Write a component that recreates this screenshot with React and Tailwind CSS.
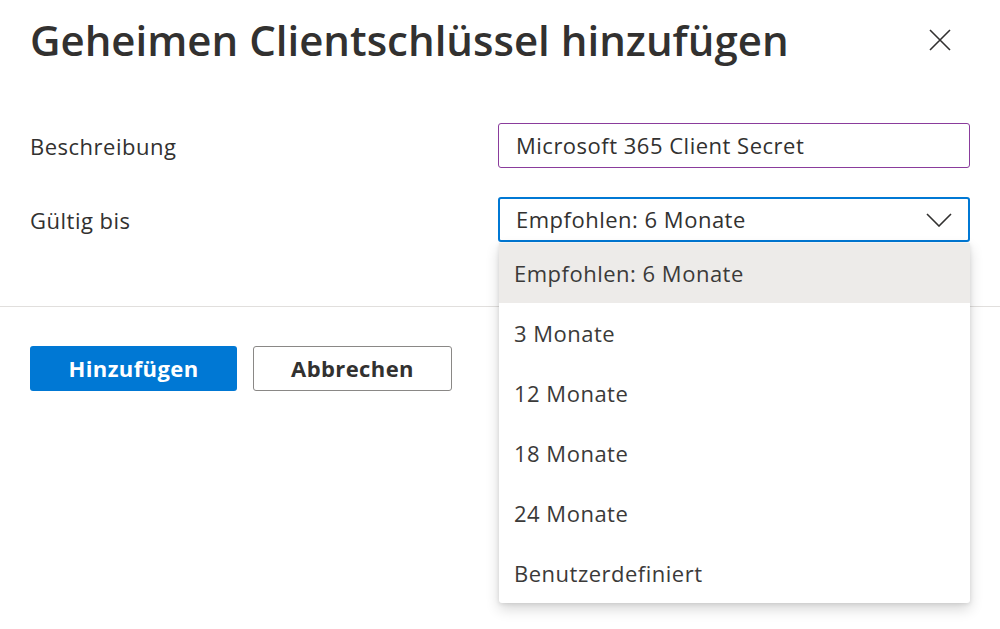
import React from "react";

const options = [
  "Empfohlen: 6 Monate",
  "3 Monate",
  "12 Monate",
  "18 Monate",
  "24 Monate",
  "Benutzerdefiniert",
];

export default function App() {
  return (
    <div className="relative w-[1000px] h-[629px] bg-white overflow-hidden font-['Open_Sans',sans-serif] text-[#323130]">
      {/* Header */}
      <div className="flex items-center justify-between h-[80px] pl-[30px] pr-[49px]">
        <h1 className="text-[42px] font-semibold leading-none">
          Geheimen Clientschlüssel hinzufügen
        </h1>
        <button className="w-[22px] h-[22px] flex items-center justify-center">
          <svg width="22" height="22" viewBox="0 0 22 22" fill="none" stroke="#323130" strokeWidth="1.6">
            <path d="M1 1 L21 21 M21 1 L1 21" />
          </svg>
        </button>
      </div>

      {/* Form */}
      <div className="px-[30px] mt-[43px] text-[22px] tracking-[0.5px]">
        <div className="flex items-center h-[45px]">
          <label className="w-[468px] pt-[2px]">Beschreibung</label>
          <div className="flex-1 h-[45px] flex items-center px-[17px] border border-[#8a3c9c] rounded-[3px]">
            Microsoft 365 Client Secret
          </div>
        </div>
        <div className="flex items-center h-[45px] mt-[29px]">
          <label className="w-[468px] pt-[2px]">Gültig bis</label>
          <div className="flex-1 h-[45px] flex items-center justify-between pl-[16px] pr-[16px] border-2 border-[#0078d4] rounded-[3px]">
            <span>Empfohlen: 6 Monate</span>
            <svg width="26" height="14" viewBox="0 0 26 14" fill="none" stroke="#323130" strokeWidth="1.6">
              <path d="M1 1 L13 13 L25 1" />
            </svg>
          </div>
        </div>
      </div>

      {/* Divider */}
      <div className="mt-[64px] border-t border-[#e1dfdd]" />

      {/* Actions */}
      <div className="flex gap-[16px] px-[30px] mt-[39px] text-[22px] tracking-[0.4px] font-bold">
        <button className="w-[207px] h-[45px] bg-[#0078d4] text-white rounded-[3px]">Hinzufügen</button>
        <button className="w-[199px] h-[45px] border border-[#8a8886] rounded-[3px] text-[#323130]">Abbrechen</button>
      </div>

      {/* Dropdown menu */}
      <ul className="absolute left-[499px] top-[243px] w-[471px] bg-white rounded-b-[3px] shadow-[0_6px_14px_rgba(0,0,0,0.16),0_1px_4px_rgba(0,0,0,0.1)] text-[22px] tracking-[0.5px] text-[#3b3a39]">
        {options.map((o, i) => (
          <li
            key={o}
            className={`h-[60px] flex items-center pl-[15px] ${i === 0 ? "bg-[#edebe9]" : ""}`}
          >
            {o}
          </li>
        ))}
      </ul>
    </div>
  );
}
